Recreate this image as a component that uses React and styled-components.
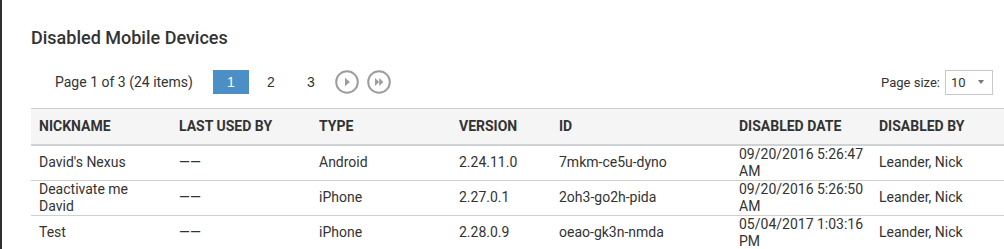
import React from "react";
import styled, { createGlobalStyle } from "styled-components";

const GlobalStyle = createGlobalStyle`
    html, body {
        margin: 0;
        padding: 0;
        background: #fff;
    }
    body {
        font-family: Roboto, "Liberation Sans", Arial, sans-serif;
        color: #333;
    }
`

const Page = styled.div`
    display: flex;
    height: 249px;
    overflow: hidden;
    border-left: 2px solid #2e2e2e;
`

const Content = styled.div`
    flex: 1;
    padding: 26px 0 0 29px;
    overflow: hidden;
`

const Title = styled.h2`
    margin: 0;
    font-size: 18px;
    font-weight: 500;
    line-height: 24px;
    color: #333;
`

const Toolbar = styled.div`
    display: flex;
    align-items: center;
    justify-content: space-between;
    height: 26px;
    margin-top: 19px;
    padding-left: 24px;
    padding-right: 11px;
`

const Pager = styled.div`
    display: flex;
    align-items: center;
`

const PageInfo = styled.span`
    font-size: 14px;
    margin-right: 20px;
`

const PageNumbers = styled.div`
    display: flex;
    gap: 4px;
    margin-right: 6px;
`

const PageButton = styled.div`
    width: 36px;
    height: 24px;
    display: flex;
    align-items: center;
    justify-content: center;
    font-family: "Liberation Sans", Arial, sans-serif;
    font-size: 14px;
    color: ${p => (p.$active ? "#fff" : "#333")};
    background: ${p => (p.$active ? "#4b8fc6" : "transparent")};
`

const NavButtons = styled.div`
    display: flex;
    gap: 8px;
`

const PageSize = styled.div`
    display: flex;
    align-items: center;
    gap: 5px;
    font-size: 13px;
`

const Select = styled.div`
    border: 1px solid #c8c8c8;
    display: flex;
    align-items: center;
    justify-content: space-between;
    padding: 0 8px 0 5px;
    box-sizing: border-box;
    width: 48px;
    height: 25px;
    font-size: 13px;
    color: #333;
`

const Caret = styled.span`
    width: 0;
    height: 0;
    border-left: 3.5px solid transparent;
    border-right: 3.5px solid transparent;
    border-top: 4px solid #777;
`

const Table = styled.table`
    margin-top: 13px;
    width: 1010px;
    border-collapse: collapse;
    table-layout: fixed;
    font-size: 14px;
`

const HeadCell = styled.th`
    width: ${p => p.$w ? `${p.$w}px` : "auto"};
    height: 36px;
    padding: 0 8px;
    text-align: left;
    font-weight: 700;
    font-size: 14px;
    background: #f5f5f5;
    border-top: 1px solid #cfcfcf;
    border-bottom: 2px solid #d0d3d6;
    box-sizing: border-box;
    vertical-align: middle;
`

const Row = styled.tr`
    border-bottom: 1px solid #cfcfcf;
`

const Cell = styled.td`
    height: 34px;
    padding: 0 6px 0 8px;
    line-height: 17px;
    vertical-align: middle;
    box-sizing: border-box;
`

function NavIcon({ double }) {
    return (
        <svg width="24" height="24" viewBox="0 0 24 24">
            <circle cx="12" cy="12" r="10.8" fill="none" stroke="#9d9d9d" strokeWidth="2" />
            {double ? (
                <>
                    <polygon points="8,8 12.2,12 8,16" fill="#9d9d9d" />
                    <polygon points="12.2,8 16.4,12 12.2,16" fill="#9d9d9d" />
                </>
            ) : (
                <polygon points="10,7.8 15,12 10,16.2" fill="#9d9d9d" />
            )}
        </svg>
    )
}

const columns = [
    { title: "Nickname", w: 140 },
    { title: "Last used by", w: 140 },
    { title: "Type", w: 140 },
    { title: "Version", w: 100 },
    { title: "ID", w: 180 },
    { title: "Disabled date", w: 140 },
    { title: "Disabled by" },
]

const devices = [
    ["David's Nexus", "——", "Android", "2.24.11.0", "7mkm-ce5u-dyno", "09/20/2016 5:26:47 AM", "Leander, Nick"],
    ["Deactivate me David", "——", "iPhone", "2.27.0.1", "2oh3-go2h-pida", "09/20/2016 5:26:50 AM", "Leander, Nick"],
    ["Test", "——", "iPhone", "2.28.0.9", "oeao-gk3n-nmda", "05/04/2017 1:03:16 PM", "Leander, Nick"],
]

export default function App() {
    return (
        <>
            <GlobalStyle />
            <Page>
                <Content>
                    <Title>Disabled Mobile Devices</Title>
                    <Toolbar>
                        <Pager>
                            <PageInfo>Page 1 of 3 (24 items)</PageInfo>
                            <PageNumbers>
                                <PageButton $active>1</PageButton>
                                <PageButton>2</PageButton>
                                <PageButton>3</PageButton>
                            </PageNumbers>
                            <NavButtons>
                                <NavIcon />
                                <NavIcon double />
                            </NavButtons>
                        </Pager>
                        <PageSize>
                            Page size:
                            <Select>
                                10
                                <Caret />
                            </Select>
                        </PageSize>
                    </Toolbar>
                    <Table>
                        <thead>
                            <tr>
                                {columns.map(c => (
                                    <HeadCell key={c.title} $w={c.w}>{c.title.toUpperCase()}</HeadCell>
                                ))}
                            </tr>
                        </thead>
                        <tbody>
                            {devices.map(d => (
                                <Row key={d[4]}>
                                    {d.map((v, i) => <Cell key={i}>{v}</Cell>)}
                                </Row>
                            ))}
                        </tbody>
                    </Table>
                </Content>
            </Page>
        </>
    )
}
